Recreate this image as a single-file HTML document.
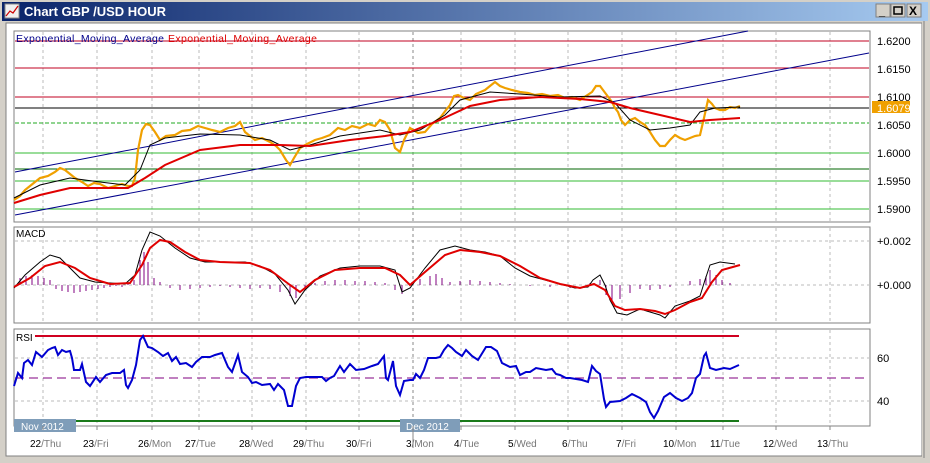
<!DOCTYPE html>
<html><head><style>
body{margin:0;width:930px;height:458px;overflow:hidden;background:#d4d0c8;font-family:"Liberation Sans",sans-serif}
</style></head><body>
<svg width="930" height="458" xmlns="http://www.w3.org/2000/svg" font-family="Liberation Sans, sans-serif">
<defs><linearGradient id="tb" x1="0" x2="1"><stop offset="0" stop-color="#0a246a"/><stop offset="1" stop-color="#a6caf0"/></linearGradient></defs>
<rect x="0" y="0" width="930" height="458" fill="#d4d0c8"/>
<rect x="2" y="2" width="926" height="19" fill="url(#tb)"/>
<rect x="5" y="4" width="14" height="14" fill="#f0f0f0" stroke="#888"/>
<polyline points="6,16 10,11 13,13 18,6" fill="none" stroke="#c00" stroke-width="1.2"/>
<text x="24" y="16" fill="#fff" font-size="13" font-weight="bold">Chart GBP /USD  HOUR</text>
<g fill="#d4d0c8" stroke="#808080"><rect x="876" y="4" width="14" height="13"/><rect x="891" y="4" width="14" height="13"/><rect x="907" y="4" width="14" height="13"/></g>
<text x="879" y="15" font-size="11" font-weight="bold">_</text>
<rect x="894" y="7" width="8" height="7" fill="none" stroke="#000" stroke-width="1.5"/>
<text x="909" y="15" font-size="12" font-weight="bold">X</text>
<rect x="6" y="23" width="916" height="433" fill="#fff" stroke="#808080"/>
<rect x="922" y="21" width="8" height="437" fill="#d4d0c8"/>
<line x1="924" y1="21" x2="924" y2="458" stroke="#808080"/>
<g fill="none" stroke="#808080"><rect x="14" y="31" width="856" height="191"/><rect x="14" y="227" width="856" height="96"/><rect x="14" y="329" width="856" height="97"/></g>
<g stroke="#bbb" stroke-dasharray="3,3">
<path d="M43 32V221M97 32V221M152 32V221M199 32V221M252 32V221M306 32V221M359 32V221M461 32V221M515 32V221M568 32V221M622 32V221M676 32V221M723 32V221M776 32V221M830 32V221"/>
<path d="M43 228V322M97 228V322M152 228V322M199 228V322M252 228V322M306 228V322M359 228V322M461 228V322M515 228V322M568 228V322M622 228V322M676 228V322M723 228V322M776 228V322M830 228V322"/>
<path d="M43 330V425M97 330V425M152 330V425M199 330V425M252 330V425M306 330V425M359 330V425M461 330V425M515 330V425M568 330V425M622 330V425M676 330V425M723 330V425M776 330V425M830 330V425"/>
<path d="M15 241H869M15 285H869M15 358H869M15 401H869"/>
</g>
<g stroke="#888" stroke-dasharray="3,3"><path d="M413 32V221M413 228V322M413 330V425"/></g>
<g stroke-width="1">
<line x1="15" y1="41" x2="869" y2="41" stroke="#c00020"/>
<line x1="15" y1="68" x2="869" y2="68" stroke="#c00020"/>
<line x1="15" y1="97" x2="869" y2="97" stroke="#c00020"/>
<line x1="15" y1="108" x2="869" y2="108" stroke="#000"/>
<line x1="15" y1="123" x2="869" y2="123" stroke="#2a2" stroke-dasharray="4,2"/>
<line x1="15" y1="153" x2="869" y2="153" stroke="#3b3"/>
<line x1="15" y1="169" x2="869" y2="169" stroke="#060"/>
<line x1="15" y1="181" x2="869" y2="181" stroke="#3b3"/>
<line x1="15" y1="209" x2="869" y2="209" stroke="#3b3"/>
</g>
<line x1="15" y1="215" x2="869" y2="53" stroke="#00008b"/>
<line x1="15" y1="172" x2="748" y2="31" stroke="#00008b"/>
<text x="16" y="42" font-size="10.5" fill="#00008b" textLength="148">Exponential_Moving_Average</text>
<text x="168" y="42" font-size="10.5" fill="#d00" textLength="149">Exponential_Moving_Average</text>
<polyline fill="none" stroke="#f0a000" stroke-width="2.2" points="14,200 20,196 25,190 30,186 40,178 48,176 55,172 60,168 65,170 70,174 75,178 82,182 88,186 94,183 100,184 108,188 115,186 122,184 128,186 132,186 135,178 138,150 142,130 146,124 150,125 155,132 160,140 166,136 175,135 182,131 190,130 198,126 205,128 212,130 220,132 228,128 235,126 240,122 245,132 250,136 255,140 262,138 270,142 276,146 280,150 286,160 290,165 294,158 300,148 307,144 315,140 322,138 330,135 338,128 345,130 352,126 360,128 368,124 375,126 380,120 385,122 390,130 395,148 400,152 404,140 410,128 418,133 425,132 432,124 440,118 446,110 450,105 454,96 458,95 464,98 470,100 476,94 485,90 490,86 495,82 500,86 505,88 512,90 520,92 528,93 535,95 542,94 550,96 558,95 565,98 572,97 580,100 586,96 592,92 596,86 600,86 603,90 606,94 609,98 612,102 615,108 618,112 621,120 625,125 630,120 635,118 640,122 645,125 650,132 655,140 660,146 665,146 670,140 675,135 680,138 685,140 690,138 695,136 700,135 704,118 708,100 712,104 715,108 720,110 725,110 730,107 735,108 740,106"/>
<polyline fill="none" stroke="#000" stroke-width="1" points="14,198 40,185 70,178 100,182 125,185 140,170 150,145 165,138 200,134 240,135 270,140 290,150 310,145 340,136 380,130 400,135 420,130 445,115 460,100 490,92 520,94 560,97 600,96 615,103 630,120 650,130 670,128 690,125 700,112 715,108 740,107"/>
<polyline fill="none" stroke="#e00000" stroke-width="2" points="14,203 40,195 70,188 100,188 128,188 145,178 165,165 200,150 240,145 280,145 310,146 350,140 385,136 410,132 440,120 470,106 500,100 540,97 580,99 610,102 630,108 660,115 690,122 710,120 740,118"/>
<rect x="872" y="101" width="38" height="12" fill="#f0a000"/>
<g font-size="11" fill="#000">
<text x="877" y="45">1.6200</text><text x="877" y="73">1.6150</text><text x="877" y="101">1.6100</text><text x="877" y="129">1.6050</text><text x="877" y="157">1.6000</text><text x="877" y="185">1.5950</text><text x="877" y="213">1.5900</text>
<text x="877" y="112" fill="#fff">1.6079</text>
<text x="877" y="245">+0.002</text><text x="877" y="289">+0.000</text>
<text x="877" y="362">60</text><text x="877" y="405">40</text>
</g>
<text x="16" y="237" font-size="10">MACD</text>
<path stroke="#800080" stroke-width="1" d="M20 285V278M26 285V276M32 285V275M38 285V276M44 285V278M50 285V280M56 285V289M62 285V291M68 285V292M74 285V293M80 285V292M86 285V291M92 285V290M98 285V289M104 285V288M110 285V287M116 285V286M122 285V287M128 285V283M134 285V280M140 285V260M144 285V252M148 285V262M154 285V278M160 285V282M170 285V288M180 285V290M190 285V289M200 285V288M210 285V287M220 285V286M230 285V287M240 285V288M250 285V289M260 285V288M270 285V289M280 285V292M290 285V296M296 285V298M305 285V289M315 285V283M325 285V281M335 285V280M345 285V280M355 285V281M365 285V281M375 285V282M385 285V283M395 285V290M402 285V294M412 285V282M420 285V279M430 285V276M436 285V274M442 285V278M450 285V282M460 285V281M470 285V280M480 285V281M490 285V282M500 285V283M510 285V284M530 285V286M550 285V287M570 285V288M590 285V283M600 285V280M606 285V295M612 285V302M620 285V299M630 285V293M640 285V289M650 285V290M660 285V289M670 285V287M680 285V285M690 285V281M700 285V279M706 285V276M710 285V270M716 285V275M722 285V280M730 285V283"/>
<polyline fill="none" stroke="#000" stroke-width="1" points="14,288 25,275 40,262 50,255 60,258 70,268 80,278 95,282 110,283 125,284 135,275 142,250 150,232 160,236 175,248 190,258 205,262 225,262 245,262 260,266 275,274 288,290 295,304 305,290 320,276 340,268 360,266 380,266 395,270 402,292 410,288 425,268 440,250 455,246 470,250 485,252 500,256 515,268 530,276 545,280 560,284 575,288 588,287 593,280 600,275 605,285 610,300 617,313 627,315 640,309 650,312 660,315 665,318 675,306 690,301 700,296 705,280 710,265 720,262 735,264"/>
<polyline fill="none" stroke="#e00000" stroke-width="2" points="14,287 30,278 45,266 60,262 75,268 90,278 110,284 130,283 142,265 150,248 160,240 170,242 185,252 200,260 220,262 250,263 270,270 290,285 300,292 315,280 335,270 360,268 385,268 400,275 410,285 425,272 445,255 460,250 480,252 500,256 520,266 540,278 560,284 580,288 594,284 605,290 615,306 625,310 640,309 655,311 665,314 675,310 690,302 702,298 712,282 722,270 740,265"/>
<line x1="15" y1="336" x2="739" y2="336" stroke="#d00020" stroke-width="2"/>
<line x1="15" y1="421" x2="739" y2="421" stroke="#1a7a1a" stroke-width="2"/>
<line x1="15" y1="378" x2="869" y2="378" stroke="#800080" stroke-dasharray="9,5"/>
<rect x="15" y="331" width="20" height="11" fill="#fff"/>
<text x="16" y="341" font-size="10" fill="#000">RSI</text>
<polyline fill="none" stroke="#0000d0" stroke-width="2" points="14,386 18,373 22,378 24,363 28,360 32,365 36,352 42,357 48,350 52,348 55,347 58,355 62,350 66,352 70,351 72,358 74,370 80,370 82,364 86,382 90,386 96,377 100,382 106,375 112,373 120,373 124,370 126,385 128,388 132,380 136,365 140,340 143,336 148,347 152,348 158,352 163,356 168,353 172,361 176,357 180,364 186,363 192,367 196,362 202,357 210,357 215,355 222,353 228,367 232,372 238,355 242,372 248,377 252,383 256,382 262,385 270,384 274,390 278,384 284,390 288,406 292,406 296,386 300,378 306,377 316,377 322,377 326,381 330,378 334,376 340,366 344,372 350,364 356,370 364,369 372,366 378,364 384,356 386,378 388,380 393,361 396,386 400,395 404,381 410,380 413,380 416,374 420,378 424,370 428,358 436,358 440,357 444,350 448,345 452,348 456,352 462,356 466,350 472,356 478,360 486,347 491,347 497,351 502,363 510,367 516,366 520,375 526,372 530,372 536,368 546,370 552,369 556,374 560,375 566,378 570,378 576,379 582,380 588,382 592,366 596,371 600,374 604,399 606,407 610,402 620,401 626,398 632,394 640,398 646,402 650,412 654,418 658,411 664,397 670,393 676,398 682,401 688,398 692,393 696,378 700,374 704,356 706,353 710,368 716,370 724,368 730,369 739,365"/>
<rect x="14" y="419" width="62" height="13" fill="#7f9db9"/>
<text x="21" y="430" font-size="10" fill="#fff">Nov 2012</text>
<rect x="400" y="419" width="60" height="13" fill="#7f9db9"/>
<text x="406" y="430" font-size="10" fill="#fff">Dec 2012</text>
<g stroke="#888"><path d="M43 426V430M97 426V430M152 426V430M199 426V430M252 426V430M306 426V430M359 426V430M413 426V448M461 426V430M515 426V430M568 426V430M622 426V430M676 426V430M723 426V430M776 426V430M830 426V430"/></g>
<g font-size="10" fill="#000">
<text x="30" y="447">22<tspan fill="#777">/Thu</tspan></text>
<text x="83" y="447">23<tspan fill="#777">/Fri</tspan></text>
<text x="138" y="447">26<tspan fill="#777">/Mon</tspan></text>
<text x="185" y="447">27<tspan fill="#777">/Tue</tspan></text>
<text x="239" y="447">28<tspan fill="#777">/Wed</tspan></text>
<text x="293" y="447">29<tspan fill="#777">/Thu</tspan></text>
<text x="346" y="447">30<tspan fill="#777">/Fri</tspan></text>
<text x="406" y="447">3<tspan fill="#777">/Mon</tspan></text>
<text x="454" y="447">4<tspan fill="#777">/Tue</tspan></text>
<text x="508" y="447">5<tspan fill="#777">/Wed</tspan></text>
<text x="562" y="447">6<tspan fill="#777">/Thu</tspan></text>
<text x="616" y="447">7<tspan fill="#777">/Fri</tspan></text>
<text x="663" y="447">10<tspan fill="#777">/Mon</tspan></text>
<text x="710" y="447">11<tspan fill="#777">/Tue</tspan></text>
<text x="763" y="447">12<tspan fill="#777">/Wed</tspan></text>
<text x="817" y="447">13<tspan fill="#777">/Thu</tspan></text>
</g>
</svg>
</body></html>
